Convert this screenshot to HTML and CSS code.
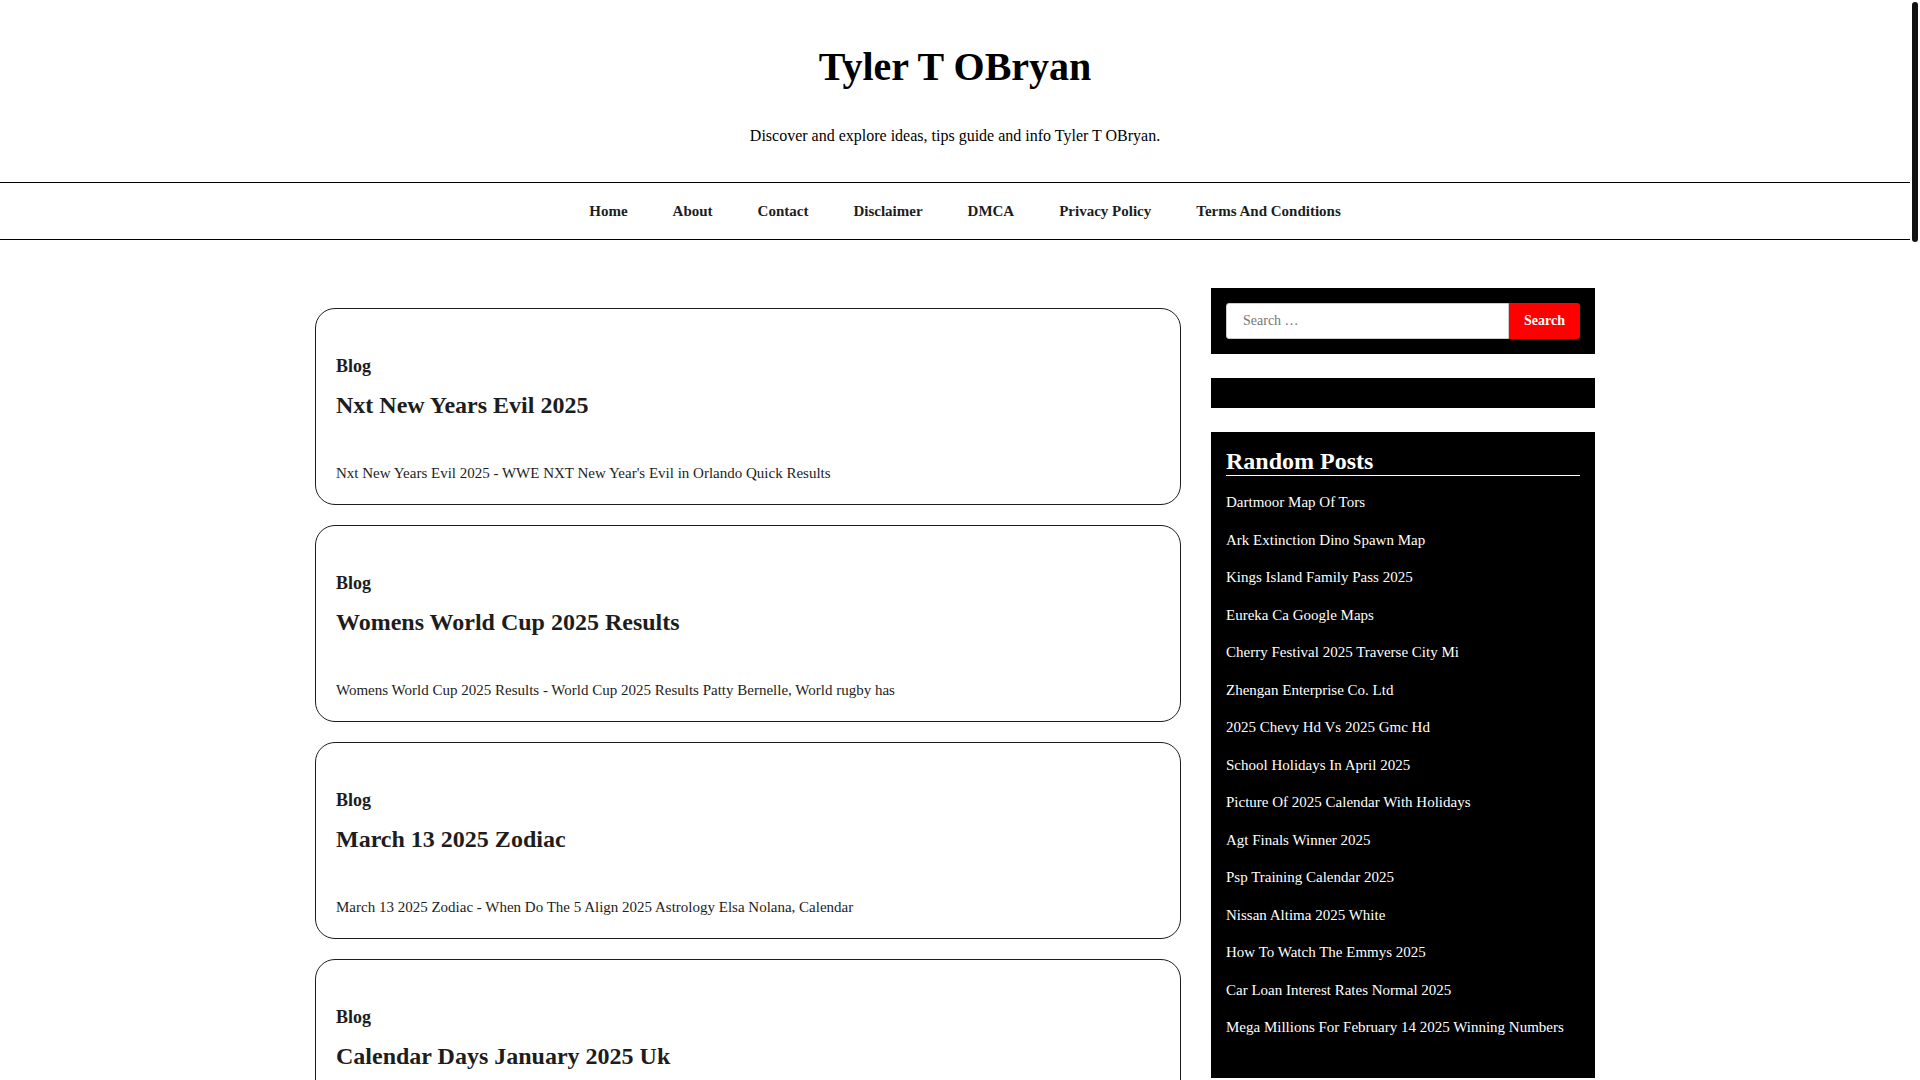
FILE: index.html
```
<!DOCTYPE html>
<html lang="en">
<head>
<meta charset="utf-8">
<meta name="viewport" content="width=device-width, initial-scale=1">
<title>Tyler T OBryan</title>
<link rel="stylesheet" href="styles.css">
</head>
<body>
<header class="site-header">
  <h1 class="site-title"><a href="#">Tyler T OBryan</a></h1>
  <p class="site-tagline">Discover and explore ideas, tips guide and info Tyler T OBryan.</p>
</header>
<nav class="site-nav" aria-label="Main">
  <ul class="nav-list">
    <li><a href="#">Home</a></li>
    <li><a href="#">About</a></li>
    <li><a href="#">Contact</a></li>
    <li><a href="#">Disclaimer</a></li>
    <li><a href="#">DMCA</a></li>
    <li><a href="#">Privacy Policy</a></li>
    <li><a href="#">Terms And Conditions</a></li>
  </ul>
</nav>
<div class="layout">
  <main class="posts">
    <article class="card">
      <a class="category" href="#">Blog</a>
      <h2 class="card-title"><a href="#">Nxt New Years Evil 2025</a></h2>
      <p class="excerpt">Nxt New Years Evil 2025 - WWE NXT New Year's Evil in Orlando Quick Results</p>
    </article>
    <article class="card">
      <a class="category" href="#">Blog</a>
      <h2 class="card-title"><a href="#">Womens World Cup 2025 Results</a></h2>
      <p class="excerpt">Womens World Cup 2025 Results - World Cup 2025 Results Patty Bernelle, World rugby has</p>
    </article>
    <article class="card">
      <a class="category" href="#">Blog</a>
      <h2 class="card-title"><a href="#">March 13 2025 Zodiac</a></h2>
      <p class="excerpt">March 13 2025 Zodiac - When Do The 5 Align 2025 Astrology Elsa Nolana, Calendar</p>
    </article>
    <article class="card">
      <a class="category" href="#">Blog</a>
      <h2 class="card-title"><a href="#">Calendar Days January 2025 Uk</a></h2>
    </article>
  </main>
  <aside class="sidebar">
    <section class="widget">
      <form class="search" role="search">
        <input class="search-field" type="search" placeholder="Search …" aria-label="Search for:">
        <button class="search-button" type="submit">Search</button>
      </form>
    </section>
    <section class="widget"></section>
    <section class="widget widget-posts">
      <h2 class="widget-title">Random Posts</h2>
      <ul class="post-links">
        <li><a href="#">Dartmoor Map Of Tors</a></li>
        <li><a href="#">Ark Extinction Dino Spawn Map</a></li>
        <li><a href="#">Kings Island Family Pass 2025</a></li>
        <li><a href="#">Eureka Ca Google Maps</a></li>
        <li><a href="#">Cherry Festival 2025 Traverse City Mi</a></li>
        <li><a href="#">Zhengan Enterprise Co. Ltd</a></li>
        <li><a href="#">2025 Chevy Hd Vs 2025 Gmc Hd</a></li>
        <li><a href="#">School Holidays In April 2025</a></li>
        <li><a href="#">Picture Of 2025 Calendar With Holidays</a></li>
        <li><a href="#">Agt Finals Winner 2025</a></li>
        <li><a href="#">Psp Training Calendar 2025</a></li>
        <li><a href="#">Nissan Altima 2025 White</a></li>
        <li><a href="#">How To Watch The Emmys 2025</a></li>
        <li><a href="#">Car Loan Interest Rates Normal 2025</a></li>
        <li><a href="#">Mega Millions For February 14 2025 Winning Numbers</a></li>
      </ul>
    </section>
  </aside>
</div>
<div class="scroll-thumb" aria-hidden="true"></div>
</body>
</html>
```
FILE: styles.css
```
*, *::before, *::after { box-sizing: border-box; }

html { scrollbar-width: none; }

body {
  margin: 0;
  padding-right: 10px;
  background: #fff;
  color: #1d1d1d;
  font-family: "Liberation Serif", "Times New Roman", serif;
  font-size: 15px;
  line-height: 1.5;
}

h1, h2, p, ul { margin: 0; padding: 0; }
ul { list-style: none; }
a { color: inherit; text-decoration: none; }

.site-header {
  display: flex;
  flex-direction: column;
  align-items: center;
  gap: 36px;
  padding: 44px 20px 36px;
  color: #000;
  text-align: center;
}

.site-title { font-size: 40px; line-height: 46px; }
.site-tagline { font-size: 16px; line-height: 20px; }

.site-nav {
  border-top: 1px solid #000;
  border-bottom: 1px solid #000;
}

.nav-list {
  display: flex;
  flex-wrap: wrap;
  justify-content: center;
  column-gap: 45px;
  padding: 16px 0 16px 20px;
  font-weight: bold;
  line-height: 24px;
}

.layout {
  display: grid;
  grid-template-columns: minmax(0, 1fr) 30%;
  align-items: start;
  gap: 30px;
  max-width: 1280px;
  margin: 0 auto;
  padding-top: 48px;
}

.posts {
  display: flex;
  flex-direction: column;
  gap: 20px;
  padding: 20px 0;
}

.card {
  display: flex;
  flex-direction: column;
  align-items: flex-start;
  min-height: 197px;
  padding: 45px 20px 19px;
  border: 1px solid #1d1d1d;
  border-radius: 20px;
}

.category { font-size: 18px; font-weight: bold; line-height: 24px; }
.card-title { margin-top: 11px; font-size: 24px; line-height: 32px; }
.excerpt { margin-top: 40px; line-height: 24px; }

.sidebar { display: grid; gap: 24px; }

.widget {
  padding: 15px;
  background: #000;
  color: #fff;
}

.widget-posts { padding-bottom: 24px; }

.search { display: flex; }

.search-field {
  flex: 1;
  min-width: 0;
  height: 36px;
  padding: 0 16px;
  border: 1px solid #ccc;
  border-radius: 3px 0 0 3px;
  background: #fff;
  color: #1d1d1d;
  font-family: inherit;
  font-size: 14px;
  appearance: none;
}

.search-field::placeholder { color: #757575; }

.search-button {
  height: 36px;
  padding: 0 15px;
  border: 0;
  border-radius: 0 3px 3px 0;
  background: #f00;
  color: #fff;
  font-family: inherit;
  font-size: 14px;
  font-weight: bold;
}

.widget-title {
  border-bottom: 1px solid #fff;
  font-size: 24px;
  line-height: 28px;
}

.post-links { padding-top: 15px; }
.post-links li { padding-bottom: 15px; }

.scroll-thumb {
  position: fixed;
  top: 2px;
  right: 2px;
  width: 6px;
  height: 240px;
  border-radius: 3px;
  background: #111;
}
```
